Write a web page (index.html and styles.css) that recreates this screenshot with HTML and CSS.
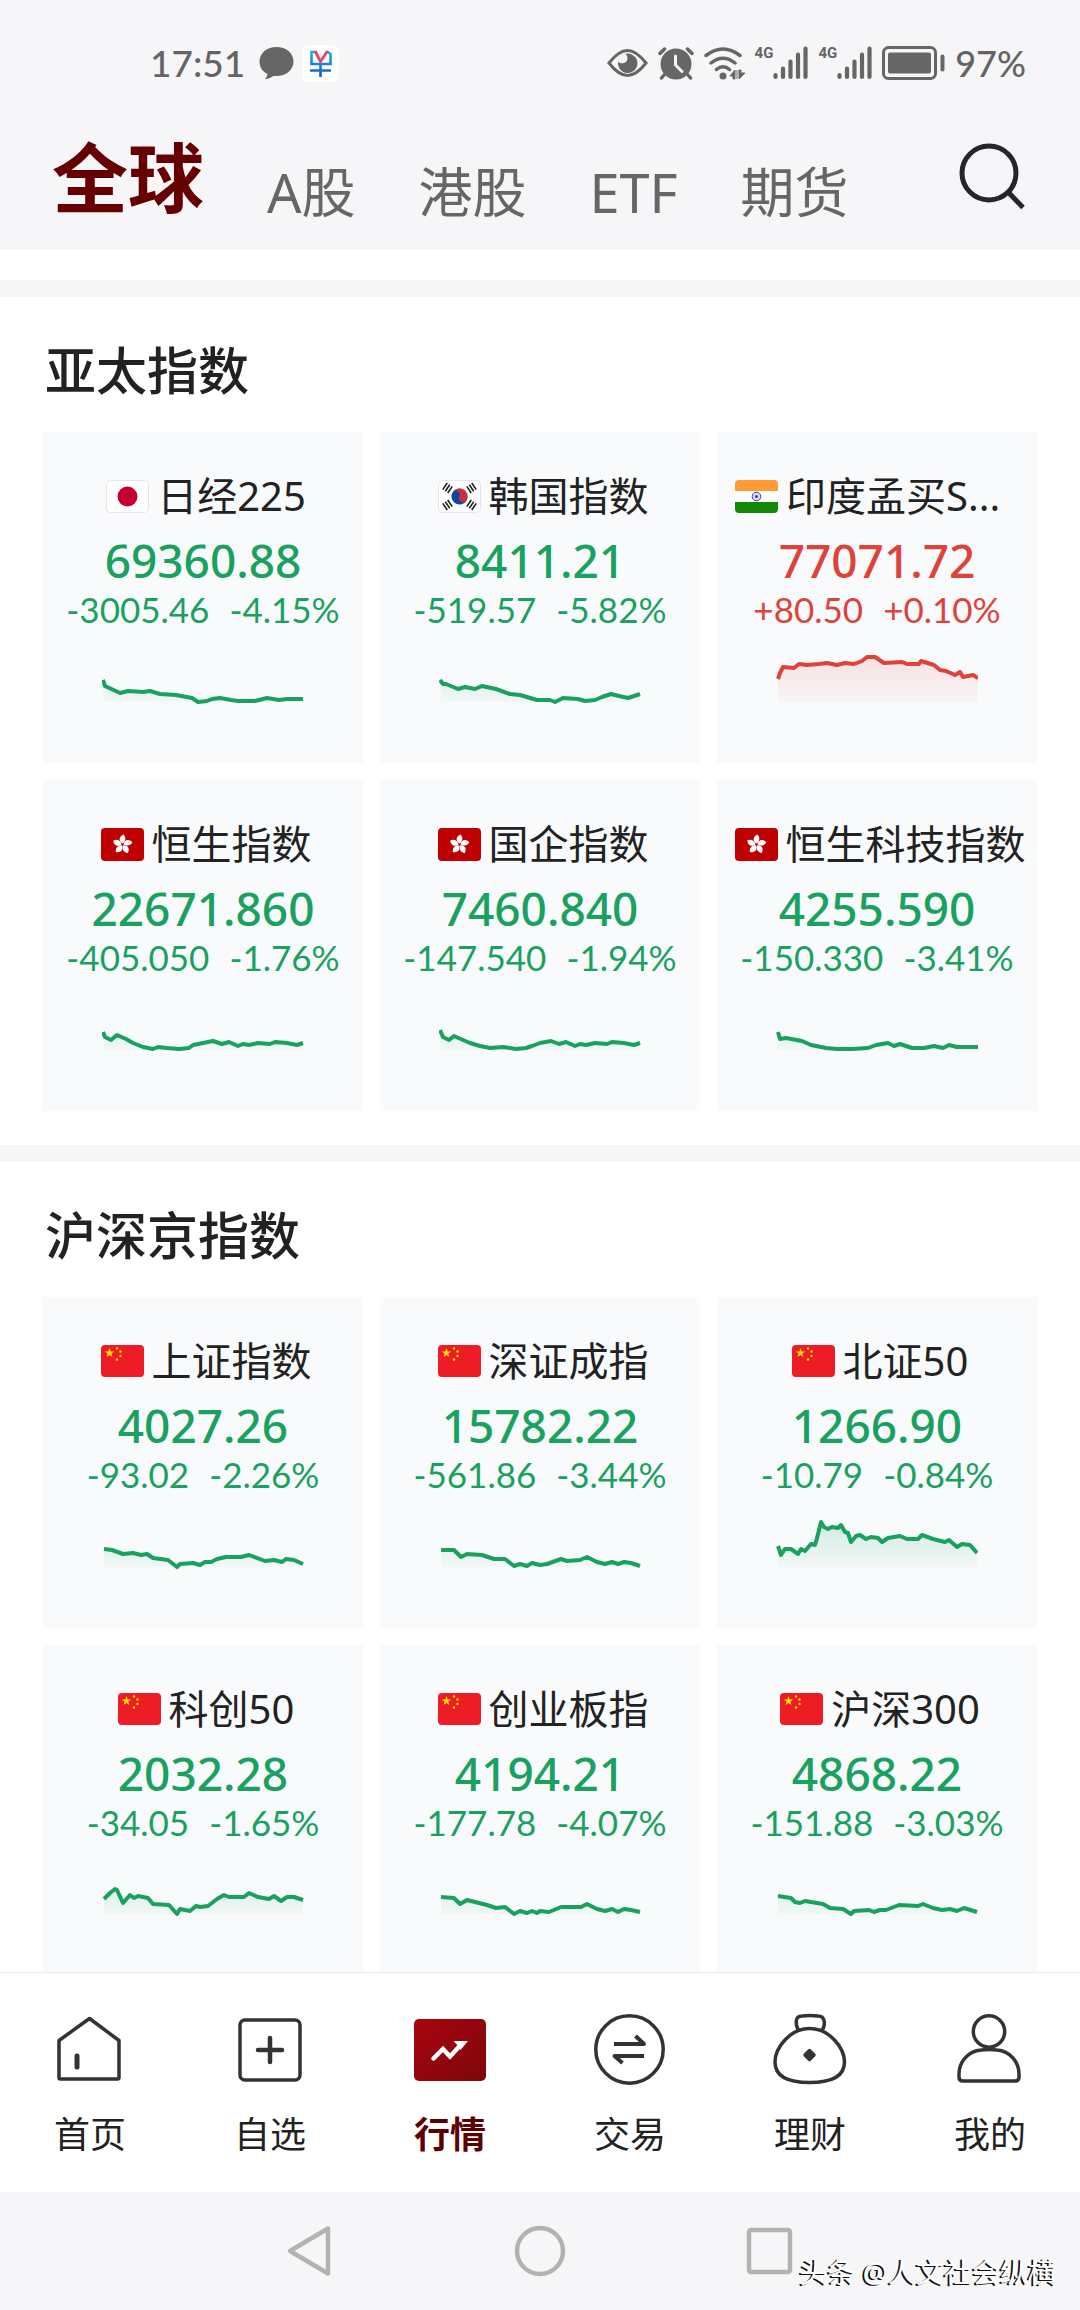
FILE: index.html
```
<!DOCTYPE html>
<html lang="zh-CN">
<head>
	<meta charset="utf-8">
	<meta name="viewport" content="width=device-width, initial-scale=1">
	<title>行情</title>
	<link rel="stylesheet" href="styles.css">
</head>
<body>

<!-- flags and gradients -->
<svg class="defs" aria-hidden="true">
	<defs>
		<linearGradient id="fill-down" x1="0" y1="0" x2="0" y2="58" gradientUnits="userSpaceOnUse">
			<stop offset="0" stop-color="#19a15f" stop-opacity="0.2"/>
			<stop offset="1" stop-color="#19a15f" stop-opacity="0.02"/>
		</linearGradient>
		<linearGradient id="fill-up" x1="0" y1="0" x2="0" y2="58" gradientUnits="userSpaceOnUse">
			<stop offset="0" stop-color="#e0413a" stop-opacity="0.16"/>
			<stop offset="1" stop-color="#e0413a" stop-opacity="0.02"/>
		</linearGradient>
		<linearGradient id="hot" x1="0" y1="0" x2="1" y2="1">
			<stop offset="0" stop-color="#a9050f"/>
			<stop offset="1" stop-color="#7c070a"/>
		</linearGradient>
		<linearGradient id="app-blue" x1="0" y1="0" x2="0" y2="1">
			<stop offset="0" stop-color="#1fb4dc"/>
			<stop offset="1" stop-color="#1450e6"/>
		</linearGradient>
		<path id="star" d="M0-5 1.2-1.6 4.8-1.5 1.9.6 2.9 4 0 2-2.9 4-1.9.6-4.8-1.5-1.2-1.6z"/>
		<g id="bars"><path d="M-4-3h8M-4 0h8M-4 3h8" stroke="#222" stroke-width="1.6" fill="none"/></g>
		<path id="petal" d="M0-1C-4-3-4-8 1-10 4-7 3-3 0-1z"/>
	</defs>
	<symbol id="jp" viewBox="0 0 43 33">
		<rect x=".5" y=".5" width="42" height="32" rx="4" fill="#fff" stroke="#e6e6ea"/>
		<circle cx="21.5" cy="16.5" r="10" fill="#c4002f"/>
	</symbol>
	<symbol id="kr" viewBox="0 0 43 33">
		<rect x=".5" y=".5" width="42" height="32" rx="4" fill="#fff" stroke="#e6e6ea"/>
		<g transform="rotate(25 21.5 16.5)">
			<circle cx="21.5" cy="16.5" r="8" fill="#0a47a0"/>
			<path d="M13.500 16.500a8 8 0 0 1 16 0a4 4 0 0 1-8 0a4 4 0 0 0-8 0z" fill="#cf2e3a"/>
		</g>
		<use href="#bars" transform="translate(9.500 8) rotate(-56)"/>
		<use href="#bars" transform="translate(33.500 25) rotate(-56)"/>
		<use href="#bars" transform="translate(33.500 8) rotate(56)"/>
		<use href="#bars" transform="translate(9.500 25) rotate(56)"/>
	</symbol>
	<symbol id="in" viewBox="0 0 43 33">
		<rect width="43" height="33" rx="4" fill="#fff"/>
		<path d="M0 11V4a4 4 0 0 1 4-4h35a4 4 0 0 1 4 4v7z" fill="#ff9a35"/>
		<path d="M0 22v7a4 4 0 0 0 4 4h35a4 4 0 0 0 4-4v-7z" fill="#138808"/>
		<circle cx="21.500" cy="16.500" r="4.300" fill="#dcdcf4" stroke="#3b3ba0"/>
		<circle cx="21.500" cy="16.500" r="1.500" fill="#3b3ba0"/>
	</symbol>
	<symbol id="hk" viewBox="0 0 43 33">
		<rect width="43" height="33" rx="4" fill="#be0000"/>
		<g transform="translate(21.500 16.500)" fill="#fff">
			<use href="#petal"/>
			<use href="#petal" transform="rotate(72)"/>
			<use href="#petal" transform="rotate(144)"/>
			<use href="#petal" transform="rotate(216)"/>
			<use href="#petal" transform="rotate(288)"/>
		</g>
	</symbol>
	<symbol id="cn" viewBox="0 0 43 33">
		<rect width="43" height="32" rx="4" fill="#ee1c25"/>
		<g fill="#ffe100">
			<use href="#star" transform="translate(8.500 8)"/>
			<circle cx="16" cy="3.500" r="1.200"/>
			<circle cx="19.500" cy="6.500" r="1.200"/>
			<circle cx="19.500" cy="11" r="1.200"/>
			<circle cx="16" cy="14.500" r="1.200"/>
		</g>
	</symbol>
</svg>

<div class="app">

	<header class="top">
		<div class="status">
			<div class="status-left">
				<span class="time">17:51</span>
				<svg width="35" height="34" viewBox="0 0 35 34"><path d="M17.500 1C27 1 34.500 7 34.500 15.500S27 30 17.500 30q-1.500 0-3 0c-2 1.500-5 3-8.500 3q2-2 2.500-5C3.500 25.500.5 21 .5 15.500.5 7 8 1 17.500 1z" fill="#666"/></svg>
				<svg width="37" height="37" viewBox="0 0 37 37">
					<rect width="37" height="37" rx="7" fill="#fff"/>
					<path d="M13 7H9.500v12h19V9L25 6.500M8 25.500h21M18.500 19v13" fill="none" stroke="url(#app-blue)" stroke-width="2.600"/>
					<path d="M13 6l5.500 10.500L25.500 6" fill="none" stroke="#e0456f" stroke-width="2.800"/>
				</svg>
			</div>
			<div class="status-right">
				<!-- eye comfort -->
				<svg width="41" height="34" viewBox="0 0 41 34">
					<path d="M2 17C9 8 14 4.500 20.500 4.500S32 8 39 17c-7 9-12 12.500-18.500 12.500S9 26 2 17z" fill="none" stroke="#666" stroke-width="3"/>
					<path d="M20.500 7.500a9.800 9.800 0 1 1-9.500 8c2 3 9 2.500 9.500-3q0-3-2-4.800z" fill="#666"/>
				</svg>
				<!-- alarm -->
				<svg width="36" height="34" viewBox="0 0 36 34">
					<circle cx="18" cy="18" r="15.500" fill="#666"/>
					<path d="M2 7.500 6.500 3M34 7.500 29.500 3M6 29l-2.500 3M30 29l2.500 3" stroke="#666" stroke-width="3.500" stroke-linecap="round"/>
					<path d="M17.500 10v9l6.500 6.500" fill="none" stroke="#f6f6f9" stroke-width="3" stroke-linecap="round"/>
				</svg>
				<!-- wifi -->
				<svg width="41" height="34" viewBox="0 0 41 34">
					<path d="M2 9.500q17-13 34 0M7 17q12-9.500 24 0M12.500 23.500q6.500-5.500 13 0" fill="none" stroke="#666" stroke-width="3.500" stroke-linecap="round"/>
					<circle cx="19" cy="30" r="3.500" fill="#666"/>
					<path d="M31 24v9h-2v-3h-3zM33 24v9M35 33v-9h2v3h4z" fill="#666" stroke="#666"/>
				</svg>
				<span class="signal">
					<span class="net">4G</span>
					<svg width="35" height="34" viewBox="0 0 35 34"><path d="M2.500 29v2M10 22.500v8.500M17.500 15.500V31M25 8.500V31M32.500 2.500V31" stroke="#666" stroke-width="4.200" stroke-linecap="round"/></svg>
				</span>
				<span class="signal">
					<span class="net">4G</span>
					<svg width="35" height="34" viewBox="0 0 35 34"><path d="M2.500 29v2M10 22.500v8.500M17.500 15.500V31M25 8.500V31M32.500 2.500V31" stroke="#666" stroke-width="4.200" stroke-linecap="round"/></svg>
				</span>
				<svg width="63" height="34" viewBox="0 0 63 34">
					<rect x="1.500" y="1.500" width="52" height="31" rx="5" fill="none" stroke="#666" stroke-width="3"/>
					<rect x="6" y="6.500" width="43" height="21" rx="2" fill="#666"/>
					<rect x="58.500" y="8.500" width="4" height="17" rx="2" fill="#666"/>
				</svg>
				<span class="percent">97%</span>
			</div>
		</div>

		<div class="nav-row">
			<nav class="markets">
				<a href="#" class="market active">全球</a>
				<a href="#" class="market">A股</a>
				<a href="#" class="market">港股</a>
				<a href="#" class="market">ETF</a>
				<a href="#" class="market">期货</a>
			</nav>
			<button class="search" aria-label="搜索">
				<svg width="68" height="68" viewBox="0 0 68 68" fill="none" stroke="#23262c" stroke-width="5"><circle cx="31" cy="31" r="27"/><path d="M50 50l15 15.500"/></svg>
			</button>
		</div>
	</header>

	<main class="content">
		<div class="prev-section"></div>
		<section class="section">
			<h2 class="section-title">亚太指数</h2>
			<div class="grid" id="asia"></div>
		</section>
		<section class="section">
			<h2 class="section-title">沪深京指数</h2>
			<div class="grid" id="china"></div>
		</section>
	</main>

	<nav class="tabbar">
		<a href="#" class="tab">
			<svg viewBox="0 0 80 80"><path d="M39.500 7.500 69 29.500v37q0 1.500-1.500 1.500h-57Q9 68 9 66.500v-37z"/><path d="M27 45v11" stroke-width="5"/></svg>
			<span>首页</span>
		</a>
		<a href="#" class="tab">
			<svg viewBox="0 0 80 80"><rect x="10" y="9" width="60" height="60" rx="5"/><path d="M40 27v24M28 39h24" stroke-width="4.500"/></svg>
			<span>自选</span>
		</a>
		<a href="#" class="tab active">
			<svg viewBox="0 0 80 80"><rect x="4" y="8" width="72" height="62" rx="5" fill="url(#hot)" stroke="none"/><path d="M23.500 47.500 33 38l7 7.500L52 32.500" stroke="#fff" stroke-width="4.500" stroke-linejoin="miter"/><path d="M43.500 30H58l-7.500 9-3-4.500z" fill="#fff" stroke="none"/></svg>
			<span>行情</span>
		</a>
		<a href="#" class="tab">
			<svg viewBox="0 0 80 80"><circle cx="39.500" cy="38.500" r="33.700"/><path d="M24 33h30l-8.500-8M54 45H24.500l8 7" stroke-width="4" stroke-linecap="butt"/></svg>
			<span>交易</span>
		</a>
		<a href="#" class="tab">
			<svg viewBox="0 0 80 80"><path d="M39.500 17.500C20 17.500 5 37 5 51c0 15 13 20.500 34.500 20.500S74.500 66 74.500 51c0-14-15-33.500-35-33.500z"/><path d="M28.500 19.500C25 13 25 5 32 5q8-1 16 0c7 0 8 8 4 14.500"/><path d="M39.500 39.500 44 44l-4.500 4.500L35 44z" fill="#333"/></svg>
			<span>理财</span>
		</a>
		<a href="#" class="tab">
			<svg viewBox="0 0 80 80"><circle cx="39" cy="20.500" r="15.700"/><path d="M31 39q8-1 16 0c13 1 22 12 22 24v3q0 4-4 4H13q-4 0-4-4v-3c0-12 9-23 22-24z"/></svg>
			<span>我的</span>
		</a>
	</nav>

	<footer class="sysbar">
		<button aria-label="返回"><svg viewBox="0 0 52 52"><path d="M44 3.500v45L6 26z"/></svg></button>
		<button aria-label="主页"><svg viewBox="0 0 52 52"><circle cx="26" cy="26" r="23"/></svg></button>
		<button aria-label="最近任务"><svg viewBox="0 0 52 52"><rect x="5" y="5" width="41" height="42" rx="2"/></svg></button>
		<span class="watermark">头条 @人文社会纵横</span>
	</footer>
</div>

<script src="script.js"></script>
</body>
</html>
```
FILE: styles.css
```
* {
  box-sizing: border-box;
}

body {
  margin: 0;
  background: #fff;
  color: #222;
  font-family: "Noto Sans", "Noto Sans CJK SC", sans-serif;
}

a {
  color: inherit;
  text-decoration: none;
}

button {
  border: 0;
  padding: 0;
  background: none;
}

svg {
  display: block;
  flex: none;
}

.defs {
  position: absolute;
  width: 0;
  height: 0;
}

.app {
  display: flex;
  flex-direction: column;
  height: 100vh;
}

/* header */
.top {
  flex: none;
  height: 250px;
  background: #f6f6f9;
}

.status {
  display: flex;
  justify-content: space-between;
  align-items: center;
  height: 126px;
  padding: 0 54px 0 150px;
  color: #646464;
}

.status-left,
.status-right {
  display: flex;
  align-items: center;
}

.status-left {
  gap: 8px;
}

.status-right {
  gap: 10px;
}

.time,
.percent {
  font-family: Lato, "Noto Sans", sans-serif;
  font-size: 37px;
  line-height: 40px;
  font-weight: 500;
}

.time {
  margin-right: 6px;
}

.percent {
  font-size: 36px;
}

.signal {
  display: flex;
  align-items: flex-start;
}

.net {
  font-family: Roboto, sans-serif;
  font-size: 15px;
  line-height: 15px;
  font-weight: 700;
}

.nav-row {
  display: flex;
  justify-content: space-between;
  align-items: flex-start;
  padding: 2px 54px 0 52px;
}

.markets {
  display: flex;
  align-items: flex-end;
  gap: 63px;
}

.market {
  color: #666;
  font-size: 54px;
  line-height: 72px;
}

.market.active {
  color: #600;
  font-size: 76px;
  line-height: 100px;
  font-weight: 700;
}

.search {
  margin-top: 14px;
}

/* list */
.content {
  flex: 1;
  min-height: 0;
  overflow-y: auto;
  scrollbar-width: none;
  background: #f6f6f7;
}

.prev-section {
  height: 30px;
  background: #fff;
}

.section {
  margin-top: 17px;
  padding: 37px 43px 34px;
  background: #fff;
}

.section-title {
  margin: 0 0 26px;
  padding-left: 2px;
  font-size: 51px;
  line-height: 72px;
  font-weight: 500;
}

.grid {
  display: grid;
  grid-template-columns: repeat(3, 1fr);
  gap: 17px;
}

.card {
  display: flex;
  flex-direction: column;
  align-items: center;
  min-width: 0;
  padding: 36px 12px 55px;
  background: #f9fafc;
}

.card-head {
  display: flex;
  justify-content: center;
  align-items: center;
  gap: 8px;
  width: 100%;
  padding-left: 6px;
  font-size: 40px;
  line-height: 56px;
  white-space: nowrap;
}

.flag {
  width: 43px;
  height: 33px;
}

.name.long {
  flex: 1;
}

.price {
  margin-top: 8px;
  font-size: 46px;
  line-height: 56px;
  font-weight: 500;
}

.change {
  display: flex;
  gap: 20px;
  font-family: Lato, "Noto Sans", sans-serif;
  font-size: 35px;
  line-height: 42px;
}

.down {
  color: #19a15f;
}

.up {
  color: #dd423b;
}

.chart {
  width: 202px;
  height: 60px;
  margin-top: 18px;
}

.line {
  fill: none;
  stroke: currentColor;
  stroke-width: 4;
  stroke-linejoin: round;
}

/* bottom tabs */
.tabbar {
  display: flex;
  flex: none;
  height: 220px;
  border-top: 1px solid #ececee;
  background: #fff;
}

.tab {
  display: flex;
  flex: 1;
  flex-direction: column;
  align-items: center;
  gap: 20px;
  padding-top: 38px;
  font-size: 36px;
  line-height: 48px;
}

.tab svg {
  width: 80px;
  height: 80px;
  fill: none;
  stroke: #333;
  stroke-width: 3.5;
  stroke-linecap: round;
  stroke-linejoin: round;
}

.tab.active {
  color: #5c0000;
  font-weight: 700;
}

/* system navigation */
.sysbar {
  position: relative;
  display: flex;
  flex: none;
  align-items: center;
  height: 118px;
  padding: 0 18%;
  background: #f6f6f9;
}

.sysbar button {
  display: flex;
  flex: 1;
  justify-content: center;
}

.sysbar svg {
  width: 52px;
  height: 52px;
  fill: none;
  stroke: #b2b2b2;
  stroke-width: 4.5;
  stroke-linejoin: round;
}

.watermark {
  position: absolute;
  right: 24px;
  bottom: 20px;
  color: #fff;
  font-size: 28px;
  line-height: 36px;
  text-shadow: -2px 1px 0 #111;
}
```
FILE: script.js
```
// flag, name, price, change, percent, line points
const asia = [
  ["jp", "日经225", "69360.88", "-3005.46", "-4.15%", "1,32 3,38 18,45 26,43 41,44 48,43 58,46 74,47 90,50 96,54 105,53 110,51 118,50 129,52 136,53 153,53 165,50 177,52 185,51 201,51"],
  ["kr", "韩国指数", "8411.21", "-519.57", "-5.82%", "1,32 4,36 7,36 19,41 26,39 36,41 43,38 57,41 71,46 81,47 98,52 101,52 111,52 116,54 124,50 139,51 146,53 156,52 163,49 172,46 180,48 189,50 201,46"],
  ["in", "印度孟买S...", "77071.72", "+80.50", "+0.10%", "2,31 4,25 7,19 18,20 23,16 31,17 43,16 51,15 61,17 69,15 78,16 86,13 91,9 99,9 108,15 126,14 131,16 143,16 145,13 158,17 164,22 170,23 179,27 184,24 187,29 197,27 202,30"],
  ["hk", "恒生指数", "22671.860", "-405.050", "-1.76%", "1,36 3,41 9,44 15,39 24,43 31,47 41,51 51,53 56,51 65,52 77,53 87,52 91,49 101,47 111,45 120,48 127,46 136,50 141,48 147,49 156,47 168,48 173,46 185,47 195,49 201,47"],
  ["hk", "国企指数", "7460.840", "-147.540", "-1.94%", "1,34 4,41 10,44 15,40 24,44 31,47 41,50 51,52 64,51 77,53 87,52 93,50 101,47 112,45 120,48 127,46 136,50 141,48 147,49 156,47 168,48 173,46 185,47 195,49 201,47"],
  ["hk", "恒生科技指数", "4255.590", "-150.330", "-3.41%", "2,36 4,43 10,42 26,45 35,49 50,52 61,53 76,53 92,52 100,49 112,47 118,50 124,48 136,52 148,52 158,50 167,52 173,49 181,51 202,51"]
];

const china = [
  ["cn", "上证指数", "4027.26", "-93.02", "-2.26%", "2,36 10,37 21,41 31,40 39,42 45,41 51,45 66,47 75,54 78,51 91,50 98,52 103,49 109,49 115,46 124,44 139,44 147,42 163,48 172,47 180,49 184,46 192,47 201,51"],
  ["cn", "深证成指", "15782.22", "-561.86", "-3.44%", "2,37 15,37 22,44 28,41 43,42 55,46 66,46 75,53 81,51 88,53 93,50 101,52 108,51 122,46 128,48 141,47 148,44 158,49 166,51 173,49 179,51 185,49 192,50 201,53"],
  ["cn", "北证50", "1266.90", "-10.79", "-0.84%", "2,33 5,42 9,36 15,36 22,41 25,36 29,38 35,31 39,32 41,25 45,9 48,14 52,16 56,14 62,15 65,12 69,19 72,20 75,29 80,23 84,22 90,26 95,24 102,25 106,29 112,25 124,23 131,26 142,26 146,22 157,26 169,29 173,27 181,34 186,31 194,32 201,40"],
  ["cn", "科创50", "2032.28", "-34.05", "-1.65%", "2,38 8,32 13,28 15,29 21,42 28,34 32,37 36,35 46,37 51,43 67,44 75,53 78,48 88,50 94,45 98,46 106,45 115,38 122,34 127,36 142,36 147,32 156,36 167,38 172,35 179,40 185,36 192,36 201,39"],
  ["cn", "创业板指", "4194.21", "-177.78", "-4.07%", "2,36 15,37 21,43 28,39 48,44 57,47 66,46 75,53 81,50 88,52 93,50 98,52 101,50 110,51 122,46 142,46 148,43 158,48 166,50 173,48 179,51 185,48 192,49 201,51"],
  ["cn", "沪深300", "4868.22", "-151.88", "-3.03%", "2,35 15,37 19,41 24,42 29,40 47,43 54,47 67,48 75,53 78,50 93,49 98,51 104,49 110,49 123,44 142,45 147,43 157,47 166,49 174,48 181,50 188,47 201,51"]
];

function card(row) {
  const [flag, name, price, diff, percent, points] = row;
  const dir = diff[0] === "+" ? "up" : "down";
  const long = name.endsWith("...") ? " long" : "";
  // close the line down to the baseline for the shaded area
  const area = points + " 201,54 2,54";
  return `<article class="card">
    <div class="card-head"><svg class="flag"><use href="#${flag}"/></svg><span class="name${long}">${name}</span></div>
    <div class="price ${dir}">${price}</div>
    <div class="change ${dir}"><span>${diff}</span><span>${percent}</span></div>
    <svg class="chart ${dir}" viewBox="0 0 202 60">
      <polygon points="${area}" fill="url(#fill-${dir})"/>
      <polyline class="line" points="${points}"/>
    </svg>
  </article>`;
}

document.getElementById("asia").innerHTML = asia.map(card).join("");
document.getElementById("china").innerHTML = china.map(card).join("");
```
